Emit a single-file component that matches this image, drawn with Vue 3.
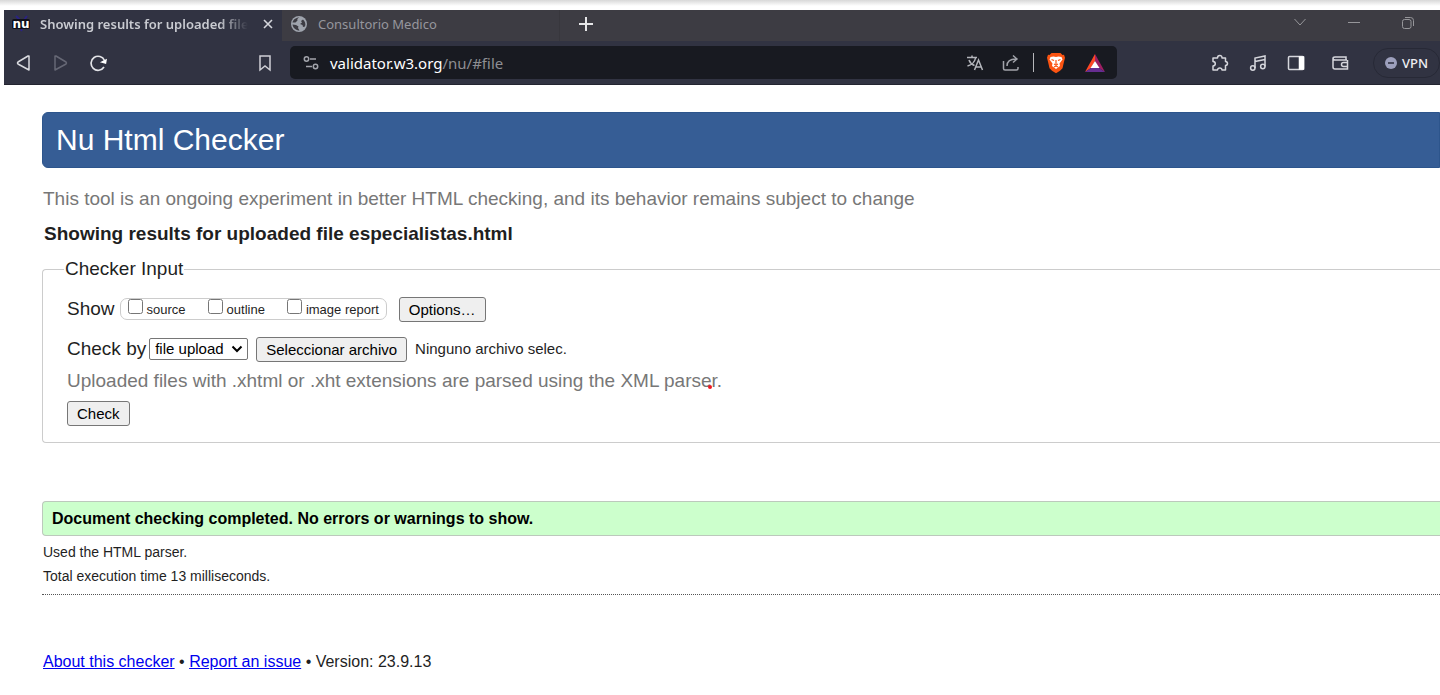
<script setup>
import { ref } from 'vue'

const reports = ref([
  { id: 'source', label: 'source', checked: false },
  { id: 'outline', label: 'outline', checked: false },
  { id: 'image', label: 'image report', checked: false },
])
const mode = ref('file upload')
</script>

<template>
  <div class="window">
    <div class="strip"></div>
    <header class="browser">
      <div class="tabs">
        <div class="tab active">
          <svg class="favicon" width="20" height="18" viewBox="0 0 20 18">
            <path d="M4 1l4 4M15 1l-3 4M9 16l1-2" stroke="#2b2384" stroke-width="2" />
            <rect x="0" y="4" width="18" height="10" rx="2" fill="#10101c" />
            <text x="9" y="13" text-anchor="middle" fill="#fff">nu</text>
          </svg>
          <span class="tab-title">Showing results for uploaded file</span>
          <button class="icon close" aria-label="Close tab">
            <svg width="12" height="12" viewBox="0 0 12 12"><path d="M2 2l8 8M10 2l-8 8" stroke="#d5d6dc" stroke-width="1.600" /></svg>
          </button>
        </div>
        <div class="tab idle">
          <svg width="18" height="18" viewBox="0 0 18 18">
            <circle cx="9" cy="9" r="8" fill="#9fa4ad" />
            <path d="M9.500 2.500C7.500 3 7 4.500 7.500 5.500L5.500 7.500H2.500C3 5 5.500 2.500 9.500 2.500ZM2.500 9.500L6 10L8.500 11.500L8 13L9.500 15.500C6 15.500 3 13 2.500 9.500ZM10 9L12 7.500L11 6L13 4.500C15 6 16 9 15 11.500L13 12L12.500 10Z" fill="#3d3c43" />
          </svg>
          <span class="idle-title">Consultorio Medico</span>
        </div>
        <button class="icon plus" aria-label="New tab">
          <svg width="16" height="16" viewBox="0 0 16 16"><path d="M8 1v14M1 8h14" stroke="#e6e6e8" stroke-width="2" /></svg>
        </button>
        <div class="window-buttons">
          <button class="icon" aria-label="Search tabs">
            <svg width="14" height="14" viewBox="0 0 14 14"><path d="M1.500 3l5.500 6 5.500-6" /></svg>
          </button>
          <button class="icon" aria-label="Minimize">
            <svg width="14" height="14" viewBox="0 0 14 14"><path d="M1 6.500h12" /></svg>
          </button>
          <button class="icon" aria-label="Restore">
            <svg width="14" height="14" viewBox="0 0 14 14"><rect x="1.500" y="3.500" width="8.500" height="9" rx="2" /><path d="M4 1.500h5.500a3 3 0 0 1 3 3V10" /></svg>
          </button>
        </div>
      </div>

      <div class="toolbar">
        <nav class="history">
          <button class="icon" aria-label="Back">
            <svg width="16" height="18" viewBox="0 0 16 18"><path d="M13 2v14L2 10Q1 9 2 8L12 2Z" stroke="#d9dadf" stroke-linejoin="round" /></svg>
          </button>
          <button class="icon" aria-label="Forward">
            <svg width="16" height="18" viewBox="0 0 16 18"><path d="M2 2v14L13 10Q14 9 13 8L3 2Z" stroke="#666875" stroke-linejoin="round" /></svg>
          </button>
          <button class="icon" aria-label="Reload">
            <svg width="18" height="18" viewBox="0 0 18 18"><path d="M14 13A7 7 0 1 1 14.500 6.500" stroke="#e3e4e8" stroke-width="1.700" /><path d="M12 8L15.500 9L16 6Z" fill="#fff" stroke="#fff" stroke-width="1.500" /></svg>
          </button>
        </nav>
        <button class="icon bookmark" aria-label="Bookmark">
          <svg width="14" height="18" viewBox="0 0 14 18"><path d="M2 2h10v14l-5-4-5 4Z" stroke="#cfd0d6" /></svg>
        </button>
        <div class="address">
          <svg width="16" height="16" viewBox="0 0 16 16" stroke="#a2a4ab"><circle cx="3.500" cy="4" r="2.200" /><path d="M7 4h6M3 11.500h6" /><circle cx="12.500" cy="11.500" r="2.200" /></svg>
          <a class="url" href="#file"><span class="host">validator.w3.org</span>/nu/#file</a>
          <div class="address-icons">
            <svg width="18" height="18" viewBox="0 0 18 18" stroke="#b3b5bb" stroke-width="1.400"><path d="M1 3.500h10M6 1.500v2M3 6c1 3 3 4.500 5.500 5.500M9.500 4C9 8 5 11 1.500 12" /><path d="M8.500 16L12.500 6L16.500 16M10 13h5" /></svg>
            <svg width="18" height="18" viewBox="0 0 18 18" stroke="#a2a4ab"><path d="M1.500 7v7.500a1.500 1.500 0 0 0 1.500 1.500h11.500a1.500 1.500 0 0 0 1.500-1.500V13" /><path d="M5 12C5 7 8 5 14 5M11 1.500L15 5L11 8.500" /></svg>
            <i class="divider"></i>
            <svg class="brave" width="20" height="22" viewBox="0 0 20 22">
              <path d="M5.500 1h9l2 2 1.500-.2 1 3-1 4-1.500 6.500-2.500 2.500-4 2.500-4-2.500-2.500-2.500L2 9.800 1 5.800l1-3L3.500 3Z" fill="#fb5412" stroke="none" />
              <path d="M4.500 5l3-.5 2.500.5 2.500-.5 3 .5 1 2.500-3 4 .5 2.500-4 3-4-3 .5-2.500-3-4Z" fill="#fff" stroke="none" />
              <path d="M5.500 7.500l2.500 1M14.500 7.500l-2.500 1M10 8v4M8 12l2 1 2-1M8 15l2-1 2 1" stroke="#fb5412" stroke-width="1.200" />
            </svg>
            <svg width="22" height="20" viewBox="0 0 22 20" stroke="none"><path d="M11 1L1 19l6-4 4-7Z" fill="#ff4724" /><path d="M11 1l10 18-6-4-4-7Z" fill="#9e1f63" /><path d="M1 19h20l-6-4H7Z" fill="#662d91" /><path d="M11 8l-4.500 7h9Z" fill="#fff" /></svg>
          </div>
        </div>
        <div class="extensions">
          <button class="icon" aria-label="Extensions">
            <svg width="18" height="18" viewBox="0 0 18 18"><path d="M2 4h4.500Q6.500 1.500 8.800 1.500T11 4h3.500v3.500q2 .2 2 2t-2 2V16H11q-.2-2-2.200-2t-2.300 2H2v-4q2.300-.3 2.300-2.300T2 7.500Z" stroke-linejoin="round" /></svg>
          </button>
          <button class="icon" aria-label="Playlist">
            <svg width="18" height="18" viewBox="0 0 18 18"><path d="M6 14V4l10-2v10.500M6 7.500l10-2" /><circle cx="3.800" cy="14" r="2.200" /><circle cx="13.800" cy="12.500" r="2.200" /></svg>
          </button>
          <button class="icon" aria-label="Sidebar">
            <svg width="18" height="18" viewBox="0 0 18 18"><rect x="1.500" y="2.500" width="15" height="13" rx="1" /><path d="M12.500 3h4v12h-4Z" fill="#fff" stroke="#fff" /></svg>
          </button>
          <button class="icon wallet" aria-label="Wallet">
            <svg width="18" height="18" viewBox="0 0 18 18"><path d="M16 6H4a2 2 0 0 1-2-1.500Q2 3 4 3h11v3M2 4.500V13a2 2 0 0 0 2 2h12.500V6M16.500 8.500h-4a2 2 0 0 0 0 4h4" /></svg>
          </button>
          <button class="vpn">
            <svg width="12" height="12" viewBox="0 0 12 12"><circle cx="6" cy="6" r="6" fill="#9da0bd" /><path d="M3 6h6" stroke="#303242" stroke-width="1.600" /></svg>
            VPN
          </button>
        </div>
      </div>
    </header>

    <main class="page">
      <h1>Nu Html Checker</h1>
      <p class="note">This tool is an ongoing experiment in better HTML checking, and its behavior remains subject to change</p>
      <h2>Showing results for uploaded file especialistas.html</h2>

      <form @submit.prevent>
        <fieldset class="input-area">
          <legend>Checker Input</legend>
          <div class="row">
            <span class="show">Show</span>
            <div class="reports">
              <label v-for="r in reports" :key="r.id" :for="r.id">
                <input :id="r.id" v-model="r.checked" type="checkbox" /><span>{{ r.label }}</span>
              </label>
            </div>
            <button type="button" class="button">Options…</button>
          </div>
          <div class="row by">
            <label for="mode">Check by</label>
            <div class="select">
              <select id="mode" v-model="mode">
                <option>file upload</option>
                <option>address</option>
                <option>text input</option>
              </select>
              <svg width="12" height="8" viewBox="0 0 12 8"><path d="M1.500 1.500L6 6l4.500-4.500" fill="none" stroke="#000" stroke-width="2" /></svg>
            </div>
            <input id="doc" class="file" type="file" />
            <label for="doc" class="button">Seleccionar archivo</label>
            <span class="filename">Ninguno archivo selec.</span>
          </div>
          <p class="hint">Uploaded files with .xhtml or .xht extensions are parsed using the XML pars<span class="marked">e<i class="dot"></i></span>r.</p>
          <button class="button" type="submit">Check</button>
        </fieldset>
      </form>

      <p class="success">Document checking completed. No errors or warnings to show.</p>
      <p class="detail">Used the HTML parser.</p>
      <p class="detail">Total execution time 13 milliseconds.</p>
      <footer>
        <a href="#about">About this checker</a> • <a href="#issue">Report an issue</a> • Version: 23.9.13
      </footer>
    </main>
  </div>
</template>

<style>
body {
  background: #fff;
}
</style>

<style scoped>
* {
  box-sizing: border-box;
}
.window {
  overflow: hidden;
  color: #1f1f1f;
  font-family: "Liberation Sans", Arial, sans-serif;
}
.strip {
  height: 10px;
  background: linear-gradient(#d8d8d8, #fff 6px);
}
.browser {
  margin-left: 4px;
  background: #313342;
  border-bottom: 1px solid #232430;
  font-family: "Noto Sans", sans-serif;
}
.icon {
  display: flex;
  padding: 0;
  border: 0;
  background: none;
}
svg {
  display: block;
  flex: none;
}
.favicon text {
  font: 700 12px "DejaVu Sans", sans-serif;
}
.tabs {
  display: flex;
  height: 31px;
  background: #3d3c43;
}
.tab {
  display: flex;
  align-items: center;
  width: 278px;
  padding: 0 8px 3px;
  font-size: 13px;
  line-height: 20px;
}
.tab.active {
  background: #313342;
}
.tab-title {
  flex: 1;
  min-width: 0;
  margin-left: 8px;
  overflow: hidden;
  white-space: nowrap;
  color: #c9cbd1;
  font-weight: 600;
  -webkit-mask-image: linear-gradient(90deg, #000 86%, transparent);
  mask-image: linear-gradient(90deg, #000 86%, transparent);
}
.close {
  margin-left: 14px;
}
.tab.idle {
  gap: 10px;
  border-right: 1px solid #38373d;
  color: #96969d;
}
.plus {
  align-items: center;
  margin-left: 18px;
  padding-bottom: 3px;
}
.window-buttons {
  display: flex;
  align-items: center;
  gap: 40px;
  margin-left: auto;
  padding: 0 25px 5px 0;
}
.window-buttons svg {
  fill: none;
  stroke: #96969a;
}
.toolbar {
  display: flex;
  align-items: center;
  height: 43px;
  padding-left: 12px;
}
.toolbar svg {
  fill: none;
  stroke-width: 1.5;
}
.history {
  display: flex;
  gap: 21px;
}
.bookmark {
  margin-left: 150px;
}
.address {
  display: flex;
  align-items: center;
  width: 827px;
  height: 33px;
  margin-left: 18px;
  padding: 0 11px 0 13px;
  border-radius: 5px;
  background: #181a21;
}
.url {
  margin-left: 11px;
  color: #8d8e93;
  font-size: 15px;
  line-height: 20px;
  text-decoration: none;
}
.host {
  color: #fff;
}
.address-icons {
  display: flex;
  align-items: center;
  gap: 18px;
  margin-left: auto;
}
.divider {
  width: 1px;
  height: 19px;
  margin: 0 -6px 0 -5px;
  background: #b6b7bb;
}
.extensions {
  display: flex;
  flex: 1;
  align-items: center;
  justify-content: flex-end;
  gap: 20px;
}
.extensions .icon svg {
  stroke: #d5d6dc;
}
.wallet {
  margin-left: 6px;
}
.vpn {
  display: flex;
  align-items: center;
  gap: 5px;
  height: 30px;
  margin-left: 4px;
  padding: 0 11px;
  border: 1px solid #272936;
  border-radius: 15px;
  background: none;
  color: #eeeef2;
  font: 500 13px "Noto Sans", sans-serif;
}
.page {
  padding: 27px 0 0 42px;
}
h1 {
  margin: 0;
  padding: 0 13px;
  border: 1px solid #2d558c;
  border-radius: 6px 0 0 6px;
  background: #365d95;
  color: #fff;
  font-size: 30px;
  font-weight: 400;
  line-height: 54px;
}
.note {
  margin: 19px 0 0 1px;
  color: #777;
  font-size: 19px;
  line-height: 24px;
}
h2 {
  margin: 11px 0 0 2px;
  font-size: 19px;
  line-height: 24px;
}
.input-area {
  min-width: 0;
  margin: 11px 0 0;
  padding: 15px 0 16px 24px;
  border: 1px solid #ccc;
  border-right: 0;
  border-radius: 4px 0 0 4px;
  font-size: 19px;
  line-height: 24px;
}
legend {
  margin-left: -3px;
  padding: 0 1px;
}
.row {
  display: flex;
  align-items: center;
  height: 26px;
}
.reports {
  display: flex;
  gap: 22px;
  height: 22px;
  margin: 0 12px 0 5px;
  padding: 0 7px;
  border: 1px solid #ccc;
  border-radius: 7px;
  font-size: 13px;
  line-height: 21px;
}
.reports label {
  display: flex;
}
.reports input {
  width: 15px;
  height: 15px;
  margin: 0 4px 0 0;
}
.button {
  display: inline-block;
  height: 25px;
  padding: 0 9px;
  border: 1px solid #767676;
  border-radius: 3px;
  background: #efefef;
  color: #000;
  font: 15px/23px "Liberation Sans", Arial, sans-serif;
}
.by {
  margin: 14px 0 7px;
}
.select {
  display: grid;
  align-items: center;
  margin: 0 8px 0 3px;
}
.select > * {
  grid-area: 1 / 1;
}
.select svg {
  justify-self: end;
  margin-right: 5px;
  pointer-events: none;
}
select {
  height: 22px;
  padding: 0 23px 0 5px;
  border: 1px solid #767676;
  border-radius: 2px;
  background: #fff;
  color: #000;
  appearance: none;
  font: 15px/20px "Liberation Sans", Arial, sans-serif;
}
.file {
  position: absolute;
  width: 1px;
  height: 1px;
  opacity: 0;
}
.filename {
  margin-left: 8px;
  font-size: 15px;
}
.hint {
  margin: 0 0 8px;
  color: #777;
}
.marked {
  position: relative;
}
.dot {
  position: absolute;
  right: 0;
  bottom: 2px;
  width: 4px;
  height: 4px;
  border-radius: 50%;
  background: #f01822;
}
.success {
  margin: 58px 0 0;
  padding: 0 9px;
  border: 1px solid #bcc9bc;
  border-right: 0;
  border-radius: 4px 0 0 4px;
  background: #cfc;
  color: #000;
  font-size: 16px;
  font-weight: 700;
  line-height: 33px;
}
.detail {
  margin: 4px 0 0 1px;
  font-size: 14px;
  line-height: 20px;
}
.success + .detail {
  margin-top: 6px;
}
footer {
  margin-top: 8px;
  padding: 57px 0 20px 1px;
  border-top: 1px dotted #555;
  font-size: 16px;
  line-height: 20px;
}
footer a {
  color: #00e;
}
</style>
